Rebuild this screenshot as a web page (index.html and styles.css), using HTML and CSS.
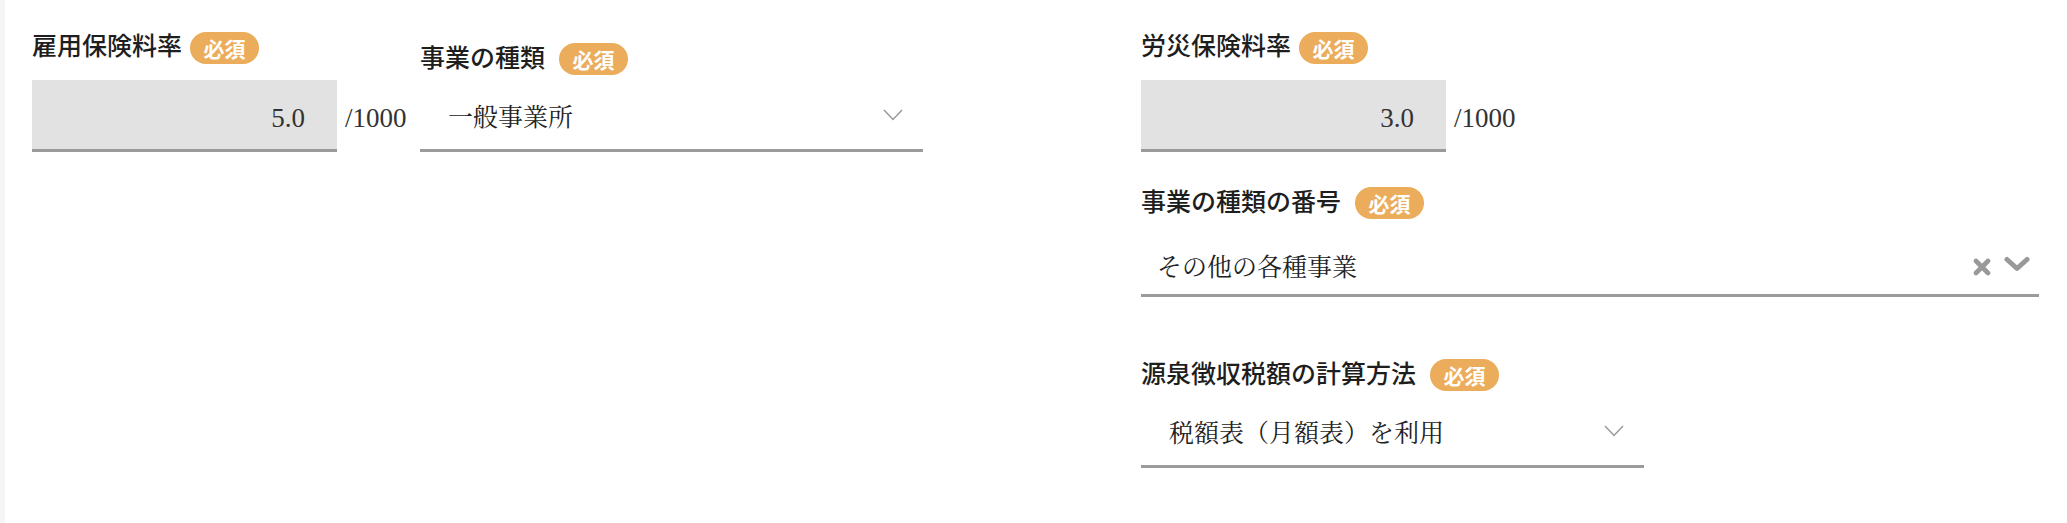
FILE: index.html
```html
<!DOCTYPE html>
<html lang="ja">
<head>
<meta charset="utf-8">
<title>保険料率設定</title>
<link rel="stylesheet" href="styles.css">
</head>
<body>
<div class="page">
  <div class="col col-left">
    <div class="row">
      <div class="field input-field">
        <div class="label-row">
          <span class="label">雇用保険料率</span>
          <span class="badge badge-input">必須</span>
        </div>
        <div class="input-line">
          <div class="num-box">5.0</div>
          <span class="unit">/1000</span>
        </div>
      </div>
      <div class="field select-field">
        <div class="label-row">
          <span class="label">事業の種類</span>
          <span class="badge badge-select">必須</span>
        </div>
        <div class="select">
          <span class="value">一般事業所</span>
          <svg class="chev-thin" width="20" height="12" viewBox="0 0 20 12"><path d="M1 1L10 10.5L19 1" fill="none" stroke="#999" stroke-width="1.5"/></svg>
        </div>
      </div>
    </div>
  </div>
  <div class="col col-right">
    <div class="field input-field">
      <div class="label-row">
        <span class="label">労災保険料率</span>
        <span class="badge badge-input">必須</span>
      </div>
      <div class="input-line">
        <div class="num-box">3.0</div>
        <span class="unit">/1000</span>
      </div>
    </div>
    <div class="field combo-field">
      <div class="label-row">
        <span class="label">事業の種類の番号</span>
        <span class="badge badge-select">必須</span>
      </div>
      <div class="combo">
        <span class="value">その他の各種事業</span>
        <svg class="clear-icon" width="18" height="18" viewBox="0 0 18 18"><path d="M3 3L15 15M15 3L3 15" stroke="#999" stroke-width="4.6" stroke-linecap="round"/></svg>
        <svg class="chev-bold" width="26" height="16" viewBox="0 0 26 16"><path d="M3 3.5L13 12.5L23 3.5" fill="none" stroke="#999" stroke-width="5" stroke-linecap="round" stroke-linejoin="round"/></svg>
      </div>
    </div>
    <div class="field select-field">
      <div class="label-row">
        <span class="label">源泉徴収税額の計算方法</span>
        <span class="badge badge-select">必須</span>
      </div>
      <div class="select">
        <span class="value">税額表（月額表）を利用</span>
        <svg class="chev-thin" width="20" height="12" viewBox="0 0 20 12"><path d="M1 1L10 10.5L19 1" fill="none" stroke="#999" stroke-width="1.5"/></svg>
      </div>
    </div>
  </div>
</div>
</body>
</html>
```

FILE: styles.css
```css
html, body {
  margin: 0;
  padding: 0;
  background: #ffffff;
}

body {
  font-family: "Noto Sans CJK JP", "Noto Sans", sans-serif;
  color: #222222;
}

.page {
  box-sizing: border-box;
  min-height: 523px;
  border-left: 5px solid #f5f5f5;
  padding: 28px 0 0 27px;
  display: grid;
  grid-template-columns: 1109px 898px;
  align-items: start;
}

.row {
  display: flex;
  align-items: flex-end;
}

.col-right {
  display: flex;
  flex-direction: column;
}

.label-row {
  height: 32px;
  display: flex;
  align-items: flex-start;
}

.label {
  font-size: 25px;
  line-height: 32px;
  font-weight: 500;
  color: #1e1e1e;
  white-space: nowrap;
}

.badge {
  box-sizing: border-box;
  width: 69px;
  height: 32px;
  border-radius: 16px;
  background: #ebac5b;
  color: #ffffff;
  font-size: 21px;
  font-weight: 700;
  line-height: 32px;
  text-align: center;
  flex: none;
}

.badge-input {
  margin-left: 8px;
  margin-top: 4px;
}

.badge-select {
  margin-left: 14px;
  margin-top: 3px;
}

/* numeric input */
.input-field {
  width: 388px;
}

.input-line {
  margin-top: 20px;
  display: flex;
  align-items: center;
}

.num-box {
  box-sizing: content-box;
  width: 273px;
  height: 62px;
  padding: 7px 32px 0 0;
  background: #e2e2e2;
  border-bottom: 3px solid #9b9b9b;
  text-align: right;
  font-family: "Liberation Serif", serif;
  font-size: 27px;
  line-height: 62px;
  color: #333333;
}

.unit {
  box-sizing: border-box;
  width: 83px;
  padding: 4px 0 0 8px;
  font-family: "Liberation Serif", serif;
  font-size: 27px;
  color: #333333;
  white-space: nowrap;
}

/* native-like select */
.select-field {
  width: 503px;
}

.select {
  margin-top: 8px;
  height: 69px;
  border-bottom: 3px solid #9b9b9b;
  display: flex;
  align-items: center;
  padding: 0 20px 0 28px;
}

.value {
  flex: 1;
  font-family: "Noto Serif CJK JP", "Noto Sans CJK JP", serif;
  font-size: 25px;
  color: #222222;
  white-space: nowrap;
}

.chev-thin {
  flex: none;
  display: block;
}

/* combobox */
.input-field + .combo-field {
  margin-top: 32px;
}

.combo-field {
  width: 898px;
  margin-bottom: 59px;
}

.combo {
  margin-top: 19px;
  height: 59px;
  border-bottom: 3px solid #9b9b9b;
  display: flex;
  align-items: center;
  padding: 0 9px 0 16px;
}

.clear-icon {
  flex: none;
  display: block;
  margin-top: 4px;
  margin-right: 13px;
}

.chev-bold {
  flex: none;
  display: block;
  margin-top: -1px;
}
```
